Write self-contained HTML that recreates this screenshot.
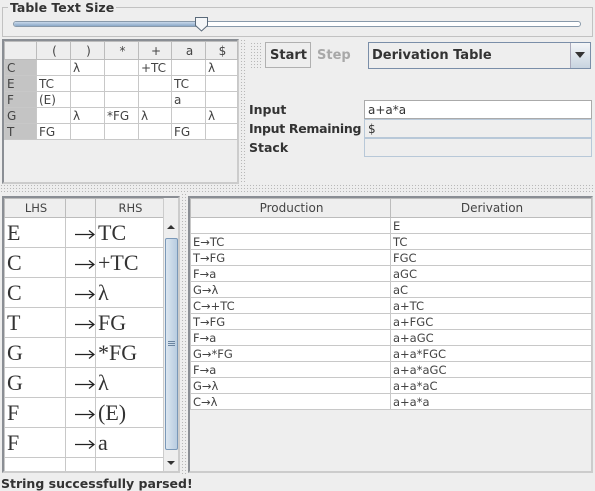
<!DOCTYPE html>
<html><head><meta charset="utf-8"><style>
*{box-sizing:border-box;margin:0;padding:0}
body{width:595px;height:491px;background:#eeeeee;position:relative;overflow:hidden;font-family:"DejaVu Sans","Liberation Sans",sans-serif;font-size:12px;color:#333}
.a{position:absolute}
.dots{background-image:radial-gradient(#b8b8b8 0.6px,transparent 0.8px);background-size:3px 3px}
table{border-collapse:collapse;table-layout:fixed}
td,th{border:1px solid #c8c8c8;padding:0 0 0 2px;white-space:nowrap;overflow:hidden;font-weight:normal}
th{background:#eeeeee;color:#444;text-align:center;border-color:#bcbcbc}
.ar{padding:0}
.ar svg{display:block;margin:2px 0 0 9px}
</style></head><body>
<div class="a" style="left:2px;top:7px;width:591px;height:30px;border:1px solid #c2c2c2"></div>
<div class="a" style="left:8px;top:0;background:#eee;padding:0 2px;font-weight:bold;font-size:12.5px;color:#333">Table Text Size</div>
<div class="a" style="left:13px;top:21px;width:568px;height:6px;border:1px solid #8899aa;border-radius:3px;background:#fff"></div>
<div class="a" style="left:14px;top:22px;width:185px;height:4px;background:linear-gradient(#c8d8ea,#8aa8c8);border-radius:2px"></div>
<svg class="a" style="left:194px;top:16px" width="16" height="16"><path d="M1.5 1.5h12v8l-6 5.5-6-5.5z" fill="#f4f6f8" stroke="#5a6a7a"/></svg>

<div class="a" style="left:2px;top:39px;width:237px;height:145px;border:2px solid #8a8e94;border-right-color:#ccc;border-bottom-color:#ccc;background:#eee">
<table style="width:233px;font-size:12px;color:#444">
<colgroup><col style="width:32px"><col style="width:34px"><col style="width:34px"><col style="width:34px"><col style="width:33px"><col style="width:34px"><col style="width:32px"></colgroup>
<tr style="height:18px"><th></th><th>(</th><th>)</th><th>*</th><th>+</th><th>a</th><th>$</th></tr>
<tr style="height:16px;background:#fff"><td style="background:#c4c4c4">C</td><td></td><td>λ</td><td></td><td>+TC</td><td></td><td>λ</td></tr>
<tr style="height:16px;background:#fff"><td style="background:#c4c4c4">E</td><td>TC</td><td></td><td></td><td></td><td>TC</td><td></td></tr>
<tr style="height:16px;background:#fff"><td style="background:#c4c4c4">F</td><td>(E)</td><td></td><td></td><td></td><td>a</td><td></td></tr>
<tr style="height:16px;background:#fff"><td style="background:#c4c4c4">G</td><td></td><td>λ</td><td>*FG</td><td>λ</td><td></td><td>λ</td></tr>
<tr style="height:16px;background:#fff"><td style="background:#c4c4c4">T</td><td>FG</td><td></td><td></td><td></td><td>FG</td><td></td></tr>
</table></div>
<div class="a dots" style="left:240px;top:39px;width:6px;height:145px"></div>
<div class="a dots" style="left:0;top:184px;width:595px;height:9px"></div>

<div class="a dots" style="left:250px;top:42px;width:12px;height:26px"></div>
<div class="a" style="left:265px;top:42px;width:46px;height:26px;border:1px solid #b0b0b0;background:#eee;font-weight:bold;font-size:13px;padding:5px 0 0 4px">Start</div>
<div class="a" style="left:317px;top:48px;font-weight:bold;font-size:13px;color:#a8a8a8">Step</div>
<div class="a" style="left:368px;top:42px;width:223px;height:27px;border:1px solid #7a8ea8;background:#eee;font-weight:bold;font-size:13px;padding:5px 0 0 3px">Derivation Table</div>
<div class="a" style="left:570px;top:43px;width:20px;height:25px;background:linear-gradient(#f4f6f8,#c8d4e0);border-left:1px solid #aab"></div>
<svg class="a" style="left:574px;top:51px" width="12" height="8"><path d="M1 1h10l-5 6z" fill="#333"/></svg>
<div class="a" style="left:249px;top:102px;font-weight:bold;font-size:12.5px">Input</div>
<div class="a" style="left:249px;top:121px;font-weight:bold;font-size:12.5px;letter-spacing:-0.3px">Input Remaining</div>
<div class="a" style="left:249px;top:140px;font-weight:bold;font-size:12.5px">Stack</div>
<div class="a" style="left:364px;top:100px;width:228px;height:19px;border:1px solid #aaa;background:#fff;padding:2px 0 0 3px">a+a*a</div>
<div class="a" style="left:364px;top:119px;width:228px;height:19px;border:1px solid #b8c8d8;background:#eee;padding:2px 0 0 3px">$</div>
<div class="a" style="left:364px;top:138px;width:228px;height:19px;border:1px solid #b8c8d8;background:#eee"></div>

<div class="a" style="left:2px;top:196px;width:178px;height:277px;border:2px solid #8a8e94;border-right-color:#ccc;border-bottom-color:#ccc;background:#fff;overflow:hidden">
<table style="width:159px;font-family:'Liberation Serif','DejaVu Serif',serif;font-size:22px;color:#333">
<colgroup><col style="width:61px"><col style="width:30px"><col style="width:68px"></colgroup>
<tr style="height:19px"><th style="font-family:'DejaVu Sans',sans-serif;font-size:11.5px">LHS</th><th></th><th style="font-family:'DejaVu Sans',sans-serif;font-size:11.5px">RHS</th></tr>
<tr style="height:30px"><td>E</td><td class="ar"><svg width="20" height="12"><path d="M0 6.5h19M14 2.5l5 4-5 4" fill="none" stroke="#222" stroke-width="1.3"/></svg></td><td>TC</td></tr>
<tr style="height:30px"><td>C</td><td class="ar"><svg width="20" height="12"><path d="M0 6.5h19M14 2.5l5 4-5 4" fill="none" stroke="#222" stroke-width="1.3"/></svg></td><td>+TC</td></tr>
<tr style="height:30px"><td>C</td><td class="ar"><svg width="20" height="12"><path d="M0 6.5h19M14 2.5l5 4-5 4" fill="none" stroke="#222" stroke-width="1.3"/></svg></td><td>λ</td></tr>
<tr style="height:30px"><td>T</td><td class="ar"><svg width="20" height="12"><path d="M0 6.5h19M14 2.5l5 4-5 4" fill="none" stroke="#222" stroke-width="1.3"/></svg></td><td>FG</td></tr>
<tr style="height:30px"><td>G</td><td class="ar"><svg width="20" height="12"><path d="M0 6.5h19M14 2.5l5 4-5 4" fill="none" stroke="#222" stroke-width="1.3"/></svg></td><td>*FG</td></tr>
<tr style="height:30px"><td>G</td><td class="ar"><svg width="20" height="12"><path d="M0 6.5h19M14 2.5l5 4-5 4" fill="none" stroke="#222" stroke-width="1.3"/></svg></td><td>λ</td></tr>
<tr style="height:30px"><td>F</td><td class="ar"><svg width="20" height="12"><path d="M0 6.5h19M14 2.5l5 4-5 4" fill="none" stroke="#222" stroke-width="1.3"/></svg></td><td>(E)</td></tr>
<tr style="height:30px"><td>F</td><td class="ar"><svg width="20" height="12"><path d="M0 6.5h19M14 2.5l5 4-5 4" fill="none" stroke="#222" stroke-width="1.3"/></svg></td><td>a</td></tr>
<tr style="height:30px"><td></td><td></td><td></td></tr>
</table>
<div class="a" style="left:159px;top:0;width:16px;height:273px;background:#eee;border-left:1px solid #ccc"></div>
<svg class="a" style="left:162px;top:26px" width="10" height="6"><path d="M1 5h8L5 1z" fill="#333"/></svg>
<div class="a" style="left:161px;top:40px;width:13px;height:212px;border:1px solid #7a98b8;background:linear-gradient(90deg,#dce6f0,#b8cce0);border-radius:2px"></div>
<div class="a" style="left:164px;top:143px;width:7px;height:1px;background:#6a84a0;box-shadow:0 2px 0 #6a84a0,0 4px 0 #6a84a0"></div>
<svg class="a" style="left:162px;top:262px" width="10" height="6"><path d="M1 1h8L5 5z" fill="#333"/></svg>
</div>
<div class="a dots" style="left:181px;top:193px;width:7px;height:283px"></div>

<div class="a" style="left:188px;top:196px;width:405px;height:277px;border:2px solid #8a8e94;border-right-color:#ccc;border-bottom-color:#ccc;background:#eee">
<table style="width:401px;font-size:11.5px;color:#444">
<colgroup><col style="width:200px"><col style="width:201px"></colgroup>
<tr style="height:19px"><th style="font-size:12px">Production</th><th style="font-size:12px">Derivation</th></tr>
<tr style="height:16px;background:#fff"><td></td><td>E</td></tr>
<tr style="height:16px;background:#fff"><td>E→TC</td><td>TC</td></tr>
<tr style="height:16px;background:#fff"><td>T→FG</td><td>FGC</td></tr>
<tr style="height:16px;background:#fff"><td>F→a</td><td>aGC</td></tr>
<tr style="height:16px;background:#fff"><td>G→λ</td><td>aC</td></tr>
<tr style="height:16px;background:#fff"><td>C→+TC</td><td>a+TC</td></tr>
<tr style="height:16px;background:#fff"><td>T→FG</td><td>a+FGC</td></tr>
<tr style="height:16px;background:#fff"><td>F→a</td><td>a+aGC</td></tr>
<tr style="height:16px;background:#fff"><td>G→*FG</td><td>a+a*FGC</td></tr>
<tr style="height:16px;background:#fff"><td>F→a</td><td>a+a*aGC</td></tr>
<tr style="height:16px;background:#fff"><td>G→λ</td><td>a+a*aC</td></tr>
<tr style="height:16px;background:#fff"><td>C→λ</td><td>a+a*a</td></tr>
</table></div>

<div class="a" style="left:1px;top:476px;font-weight:bold;font-size:12.5px;color:#333">String successfully parsed!</div>
</body></html>
